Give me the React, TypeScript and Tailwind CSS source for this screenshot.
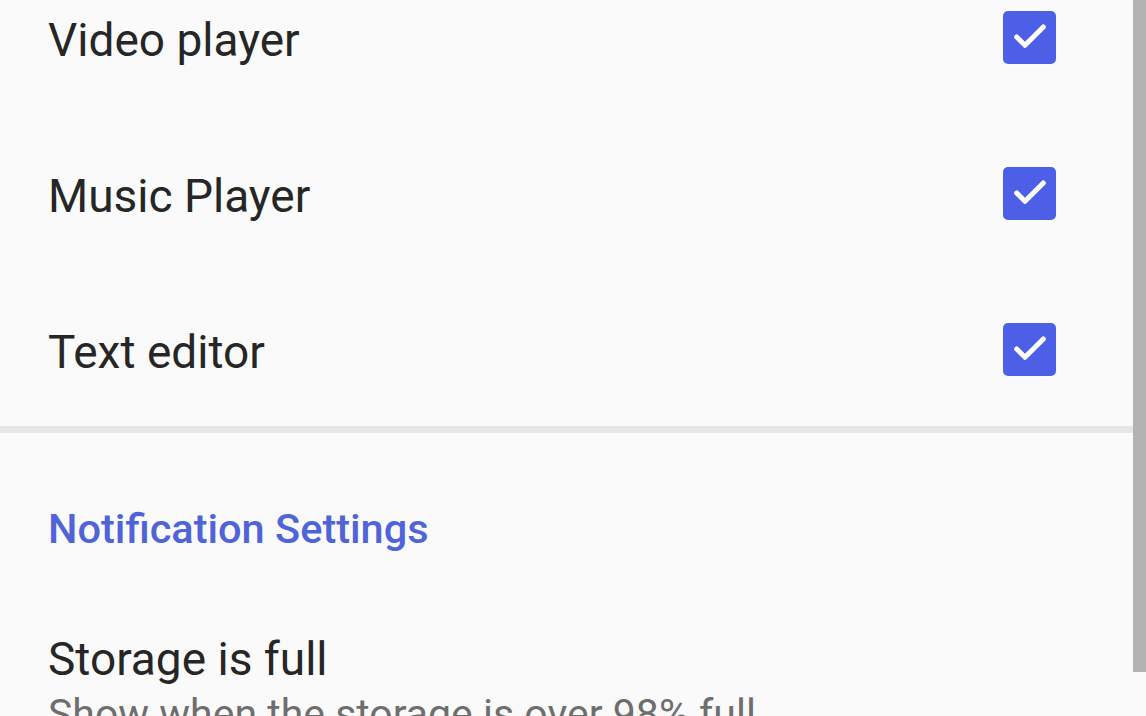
import { Check } from "lucide-react";

interface AppRow {
  id: string;
  label: string;
  checked: boolean;
}

const apps: AppRow[] = [
  { id: "video", label: "Video player", checked: true },
  { id: "music", label: "Music Player", checked: true },
  { id: "text", label: "Text editor", checked: true },
];

function CheckBox({ checked }: { checked: boolean }) {
  return (
    <div
      className={`${
        checked ? "bg-[#4c5fe6]" : "border-4 border-[#757575]"
      } mb-[6px] flex h-[53px] w-[53px] items-center justify-center rounded-[5px]`}
    >
      {checked && <Check className="h-[40px] w-[40px] text-white" strokeWidth={3} />}
    </div>
  );
}

export default function App() {
  return (
    <div className="relative h-[716px] w-[1146px] overflow-hidden bg-[#fafafa] font-['Roboto',sans-serif] text-[#262626]">
      <div className="pr-[13px]">
        <div className="-mt-[38px]">
          {apps.map((app) => (
            <div key={app.id} className="flex h-[156px] items-center justify-between pl-[48px] pr-[77px]">
              <span className="text-[46px] leading-none">{app.label}</span>
              <CheckBox checked={app.checked} />
            </div>
          ))}
        </div>
        <div className="-mt-[4px] h-[7px] bg-[#e6e6e6]"></div>
        <div className="pl-[48px]">
          <p className="mt-[75px] text-[41.5px] font-medium leading-none text-[#5064d9]">
            Notification Settings
          </p>
          <p className="mt-[86px] text-[46px] leading-none">Storage is full</p>
          <p className="mt-[12px] text-[41px] leading-none text-[#6e6e6e]">
            Show when the storage is over 98% full
          </p>
        </div>
      </div>
      {/* scrollbar */}
      <div className="absolute right-0 top-0 h-[672px] w-[13px] bg-[#b3b3b3]"></div>
    </div>
  );
}
